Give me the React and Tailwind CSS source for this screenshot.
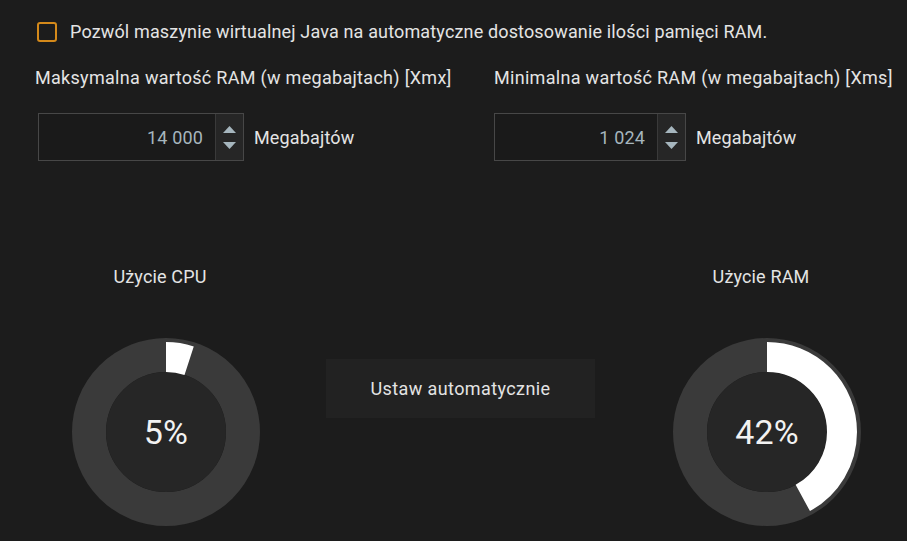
import { useState } from "react";

function Spinner({ value, unit, width }) {
  return (
    <div className="flex items-center gap-[10px]">
      <div className="flex h-[48px] border border-[#474747] bg-[#1a1a1a]">
        <div
          className="flex items-center justify-end pr-[12px] text-[18px] text-[#a6b6be]"
          style={{ width }}
        >
          {value}
        </div>
        <div className="flex w-[28px] flex-col items-center justify-center gap-[9px] border-l border-[#3a3a3a] bg-[#262626]">
          <svg width="13" height="7" viewBox="0 0 13 7">
            <path d="M6.5 0 L13 7 L0 7 Z" fill="#a6b6be" />
          </svg>
          <svg width="13" height="7" viewBox="0 0 13 7">
            <path d="M0 0 L13 0 L6.5 7 Z" fill="#a6b6be" />
          </svg>
        </div>
      </div>
      <span className="text-[18px] text-[#e4e4e4]">{unit}</span>
    </div>
  );
}

function Donut({ percent }) {
  const r = 75;
  const c = 2 * Math.PI * r;
  return (
    <div className="relative h-[188px] w-[188px]">
      <svg width="188" height="188" viewBox="0 0 188 188">
        <circle cx="94" cy="94" r="77" fill="none" stroke="#3a3a3a" strokeWidth="34" />
        <circle cx="94" cy="94" r="60" fill="#262626" />
        <circle
          cx="94"
          cy="94"
          r={r}
          fill="none"
          stroke="#ffffff"
          strokeWidth="30"
          strokeDasharray={`${(c * percent) / 100} ${c}`}
          transform="rotate(-90 94 94)"
        />
      </svg>
      <div className="absolute inset-0 flex items-center justify-center text-[34px] text-[#f2f2f2]">
        {percent}%
      </div>
    </div>
  );
}

export default function App() {
  const [auto, setAuto] = useState(false);

  return (
    <div className="h-[541px] w-[907px] overflow-hidden bg-[#1c1c1c] font-['Roboto',sans-serif] tracking-[0.15px] text-[#e4e4e4]">
      {/* auto memory toggle */}
      <div className="ml-[37px] flex items-center gap-[13px] pt-[21px]">
        <button
          onClick={() => setAuto(!auto)}
          className="h-[20px] w-[20px] shrink-0 rounded-[3px] border-2 border-[#d4891a]"
        />
        <span className="text-[18px] leading-[22px]">
          Pozwól maszynie wirtualnej Java na automatyczne dostosowanie ilości pamięci RAM.
        </span>
      </div>

      {/* Xmx / Xms */}
      <div className="mt-[24px] flex">
        <div className="ml-[35px] w-[459px]">
          <div className="text-[18px] leading-[22px] tracking-[0.3px]">Maksymalna wartość RAM (w megabajtach) [Xmx]</div>
          <div className="ml-[3px] mt-[24px]">
            <Spinner value="14 000" unit="Megabajtów" width={176} />
          </div>
        </div>
        <div>
          <div className="text-[18px] leading-[22px] tracking-[0.3px]">Minimalna wartość RAM (w megabajtach) [Xms]</div>
          <div className="mt-[24px]">
            <Spinner value="1 024" unit="Megabajtów" width={162} />
          </div>
        </div>
      </div>

      {/* usage */}
      <div className="mt-[105px] flex items-start">
        <div className="ml-[72px] flex w-[188px] flex-col items-center">
          <div className="pr-[12px] text-[18px] leading-[22px]">Użycie CPU</div>
          <div className="mt-[50px]">
            <Donut percent={5} />
          </div>
        </div>
        <button className="ml-[66px] mt-[93px] h-[59px] w-[269px] bg-[#222222] text-[18px] tracking-[0.4px] text-[#e4e4e4]">
          Ustaw automatycznie
        </button>
        <div className="ml-[78px] flex w-[188px] flex-col items-center">
          <div className="pr-[12px] text-[18px] leading-[22px]">Użycie RAM</div>
          <div className="mt-[50px]">
            <Donut percent={42} />
          </div>
        </div>
      </div>
    </div>
  );
}
